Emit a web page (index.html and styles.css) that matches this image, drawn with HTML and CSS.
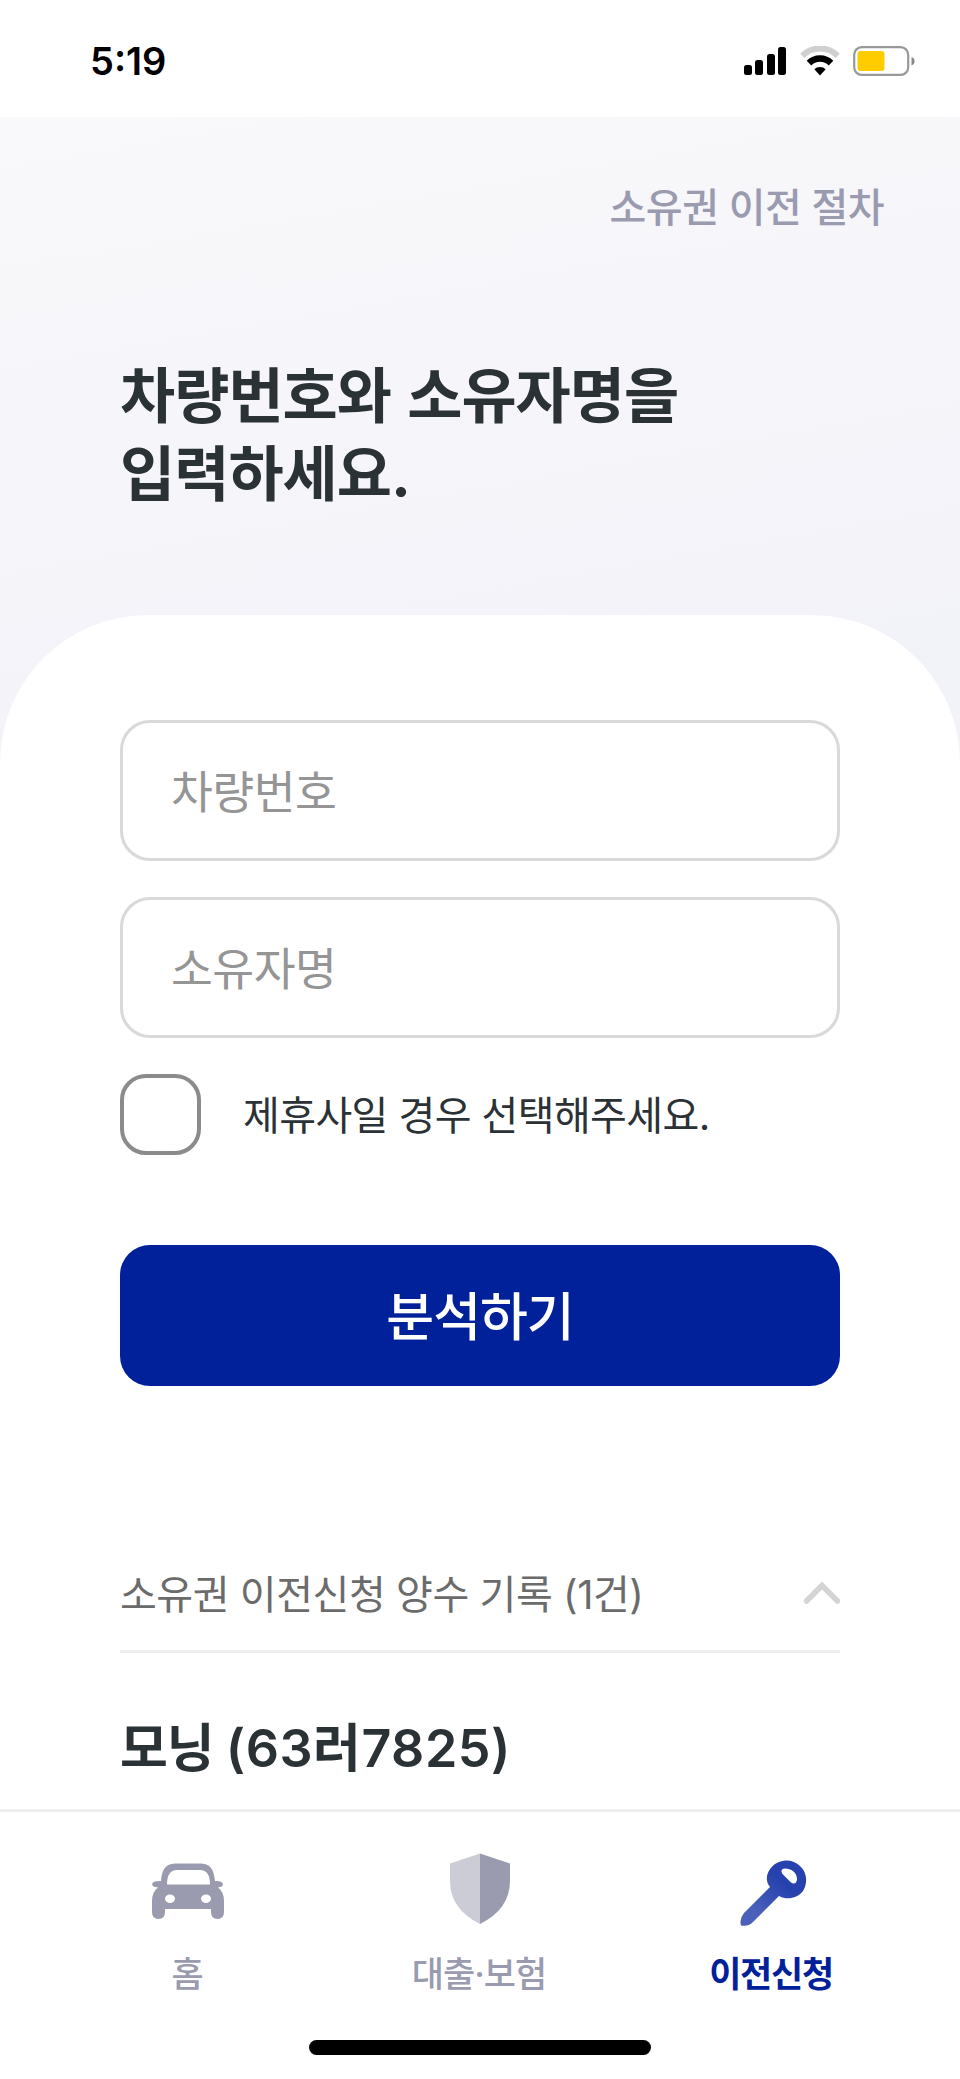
FILE: index.html
```
<!DOCTYPE html>
<html lang="ko">
<head>
    <meta charset="UTF-8">
    <meta name="viewport" content="width=device-width, initial-scale=1.0">
    <title>이전신청</title>
    <link rel="stylesheet" href="styles.css">
</head>
<body>
    <div class="status-bar">
        <span class="time">5:19</span>
        <div class="status-icons">
            <svg width="44" height="30" viewBox="0 0 44 30">
                <rect x="1" y="19" width="8" height="10" rx="2.5"/>
                <rect x="12" y="14" width="8" height="15" rx="2.5"/>
                <rect x="24" y="8" width="8" height="21" rx="2.5"/>
                <rect x="35" y="1" width="8" height="28" rx="2.5"/>
            </svg>
            <svg width="40" height="30" viewBox="0 0 40 30" fill="none">
                <path d="M2.3 9.8A25 25 0 0 1 37.7 9.8" stroke="#d0d0d0" stroke-width="6"/>
                <path d="M9 17.1A15.5 15.5 0 0 1 31 17.1" stroke="#000" stroke-width="6.5"/>
                <path d="M14.3 23.3A8 8 0 0 1 25.7 23.3L20 29.5Z" fill="#000"/>
            </svg>
            <svg width="62" height="30" viewBox="0 0 62 30">
                <rect x="1.2" y="1.2" width="54" height="27.6" rx="7.5" fill="none" stroke="#999" stroke-width="2.2"/>
                <rect x="4.5" y="5" width="27" height="20" rx="3" fill="#fc0"/>
                <path d="M58.5 11Q61.5 12 61.5 15.2T58.5 19.5Z" fill="#888"/>
            </svg>
        </div>
    </div>

    <main>
        <header>
            <a class="guide">소유권 이전 절차</a>
            <h1>차량번호와 소유자명을<br>입력하세요.</h1>
        </header>
        <section class="sheet">
            <form>
                <input class="field" type="text" placeholder="차량번호">
                <input class="field" type="text" placeholder="소유자명">
                <label class="partner">
                    <input type="checkbox">
                    <span>제휴사일 경우 선택해주세요.</span>
                </label>
                <button type="button">분석하기</button>
            </form>
            <div class="history-head">
                <span>소유권 이전신청 양수 기록 (1건)</span>
                <svg width="38" height="24" viewBox="0 0 38 24">
                    <path d="M4.5 21L20 5.5L35.500 21" fill="none" stroke="#d4d4d4" stroke-width="5.5" stroke-linecap="round"/>
                </svg>
            </div>
            <h2>모닝 <span class="plate">(63러7825)</span></h2>
        </section>
    </main>

    <nav>
        <a class="tab">
            <svg width="72" height="72" viewBox="0 -1 72 72" fill="#9a9baf">
                <path fill-rule="evenodd" d="M9 27C10 13 16 9.500 24 9.500H48C56 9.500 62 13 63 27Q70 26.500 71 30Q71 33 66 33.500Q72 38 72 47V58Q72 65 65.500 65Q59 65 59 58V55H13V58Q13 65 6.500 65Q0 65 0 58V47Q0 38 6 33.500Q0 33 0 30Q1 26.500 9 27ZM15 30.500H58Q58 16 48 16H25Q15 16 15 30.500ZM18 40.500a5 4.200 0 0 0 0 8.400a5 4.200 0 0 0 0 -8.400ZM54 40.500a5 4.200 0 0 0 0 8.400a5 4.200 0 0 0 0 -8.400Z"/>
            </svg>
            <span>홈</span>
        </a>
        <a class="tab">
            <svg width="72" height="72" viewBox="0 0 72 72">
                <path d="M36 .5V71Q6 56 6 28V10.500Z" fill="#cbccd5"/>
                <path d="M36 .5V71Q66 56 66 28V10.500Z" fill="#9a9baf"/>
            </svg>
            <span>대출·보험</span>
        </a>
        <a class="tab active">
            <svg class="key" width="72" height="72" viewBox="0 -1 72 72">
                <defs>
                    <linearGradient id="key" x1="0.65" y1="0.35" x2="0.25" y2="0.8">
                        <stop offset="0" stop-color="#2742ae"/>
                        <stop offset="1" stop-color="#4a60bb"/>
                    </linearGradient>
                </defs>
                <path fill="url(#key)" fill-rule="evenodd" d="M34 33C28 26 31 16 39 10C47 4.500 58 5.500 64 12C71 18 72 29 67 37C61 45 50 46 43 42L17 68Q12 73 5 71.500Q3 65 8 59ZM49 14.500C45 14.500 44.500 18 47 20.500L55 28.500C58.500 31 61 28.500 61 25C61 18.500 55 14.500 49 14.500Z"/>
            </svg>
            <span>이전신청</span>
        </a>
    </nav>
    <div class="home-indicator"></div>
</body>
</html>
```
FILE: styles.css
```
* {
    box-sizing: border-box;
}
body {
    margin: 0;
    height: 2079px;
    display: flex;
    flex-direction: column;
    overflow: hidden;
    background: #fff;
    color: #2b3236;
    font-family: Inter, "Noto Sans CJK KR", sans-serif;
}
.status-bar {
    flex: none;
    height: 117px;
    padding: 4px 45px 0 90px;
    display: flex;
    align-items: center;
    justify-content: space-between;
}
.time {
    font-size: 38px;
    font-weight: 600;
    color: #000;
}
.status-icons {
    display: flex;
    gap: 13px;
}
main {
    flex: 1;
    min-height: 0;
    overflow: hidden;
    background: linear-gradient(170deg, #f9f9fb 0, #f2f2f9 700px);
}
header {
    height: 498px;
    padding: 61px 76px 0 120px;
}
.guide {
    display: block;
    text-align: right;
    font-size: 40px;
    line-height: 60px;
    letter-spacing: -0.5px;
    font-weight: 500;
    color: #9a9baf;
}
h1 {
    margin: 119px 0 0;
    font-size: 60px;
    line-height: 78px;
    letter-spacing: -1px;
    word-spacing: 3px;
    font-weight: 700;
}
.sheet {
    min-height: 100%;
    padding: 105px 120px 0;
    background: #fff;
    border-radius: 148px 148px 0 0;
}
form {
    display: flex;
    flex-direction: column;
}
.field {
    height: 141px;
    margin: 0 0 36px;
    padding: 4px 48px 0;
    border: 3px solid #d9d9d9;
    border-radius: 30px;
    background: #fff;
    font: 400 45.5px Inter, "Noto Sans CJK KR", sans-serif;
    letter-spacing: -0.5px;
}
.field::placeholder {
    color: #959595;
}
.partner {
    display: flex;
    align-items: center;
    gap: 42px;
    height: 81px;
    font-size: 40px;
    letter-spacing: -0.6px;
}
.partner span {
    padding-bottom: 3px;
}
.partner input {
    appearance: none;
    width: 81px;
    height: 81px;
    margin: 0;
    border: 4px solid #8b8b8b;
    border-radius: 26px;
}
button {
    height: 141px;
    margin: 90px 0 0;
    padding: 0 0 4px;
    border: 0;
    border-radius: 30px;
    background: #00219a;
    color: #fff;
    font: 500 52px Inter, "Noto Sans CJK KR", sans-serif;
    letter-spacing: -1px;
}
.history-head {
    display: flex;
    align-items: center;
    justify-content: space-between;
    height: 120px;
    margin-top: 147px;
    border-bottom: 3px solid #eee;
    font-size: 40px;
    letter-spacing: -0.45px;
    color: #6b6b6b;
}
h2 {
    margin: 58px 0 0;
    font-size: 52px;
    line-height: 76px;
    letter-spacing: -1px;
    font-weight: 600;
}
.plate {
    letter-spacing: 0.5px;
}
nav {
    flex: none;
    display: flex;
    height: 231px;
    padding: 41px 42px 0;
    border-top: 3px solid #eee;
    background: #fff;
}
.tab {
    flex: 1;
    display: flex;
    flex-direction: column;
    align-items: center;
    gap: 24px;
    font-size: 35px;
    line-height: 50px;
    letter-spacing: -1px;
    font-weight: 500;
    color: #9a9baf;
}
.tab span {
    margin-left: -2px;
}
.key {
    overflow: visible;
}
.active {
    color: #00219a;
    font-weight: 700;
    letter-spacing: -1.3px;
}
.home-indicator {
    flex: none;
    width: 342px;
    height: 15px;
    margin: 0 auto 24px;
    border-radius: 8px;
    background: #000;
}
```
